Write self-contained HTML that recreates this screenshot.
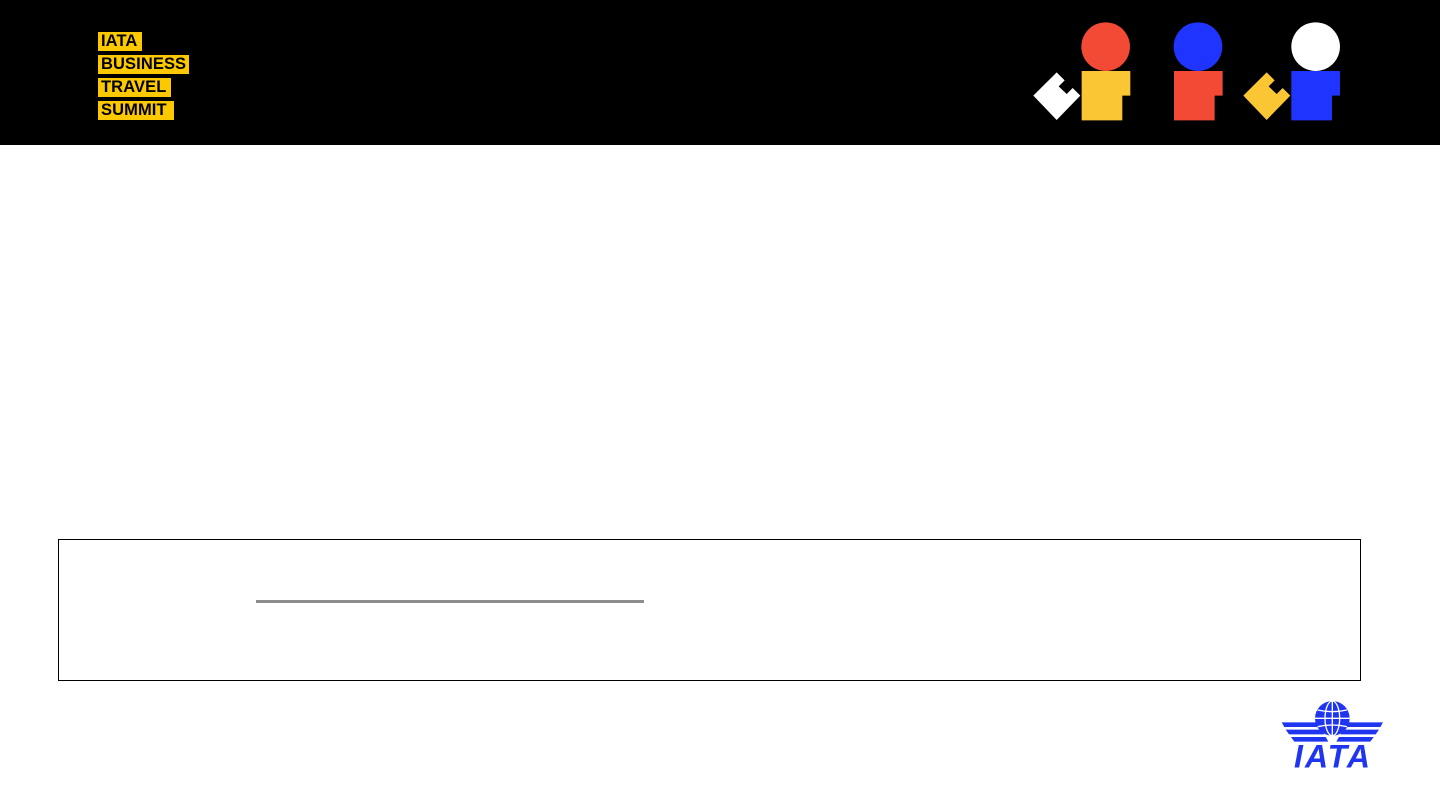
<!DOCTYPE html>
<html><head><meta charset="utf-8"><style>
html,body{margin:0;padding:0;width:1440px;height:810px;background:#fff;overflow:hidden;font-family:"Liberation Sans",sans-serif}
.hdr{position:absolute;left:0;top:0;width:1440px;height:145px;background:#000}
.lb{position:absolute;left:98px;height:19px;background:#fcc800;color:#000;font-weight:bold;font-size:16.5px;line-height:19px;padding-left:3px;box-sizing:border-box;letter-spacing:0.1px}
.box{position:absolute;left:58px;top:539px;width:1303px;height:142px;border:1px solid #000;box-sizing:border-box}
.ln{position:absolute;left:256px;top:600px;width:388px;height:3px;background:#8c8c8c}
</style></head><body>
<div class="hdr"></div>
<div class="lb" style="top:32px;width:44px">IATA</div>
<div class="lb" style="top:55px;width:91px">BUSINESS</div>
<div class="lb" style="top:78px;width:73px">TRAVEL</div>
<div class="lb" style="top:101px;width:76px">SUMMIT</div>
<svg style="position:absolute;left:0;top:0" width="1440" height="145">
<g transform="translate(1025,15) scale(0.3333)">
<polygon fill="#fff" points="25,242 95,172 119,196 101,214 125,237 143,219 166,242 95,315"/>
<circle cx="242" cy="95" r="73" fill="#f24a35"/>
<polygon fill="#fbc633" points="170,168 316,168 316,242 292,242 292,316 170,316"/>
<circle cx="519" cy="95" r="73" fill="#1f35ff"/>
<polygon fill="#f24a35" points="447,168 593,168 593,242 569,242 569,316 447,316"/>
<polygon fill="#fbc633" points="655,242 725,172 749,196 731,214 755,237 773,219 796,242 725,315"/>
<circle cx="872" cy="95" r="73" fill="#fff"/>
<polygon fill="#1f35ff" points="799,168 945,168 945,242 921,242 921,316 799,316"/>
</g>
</svg>
<div class="box"></div>
<div class="ln"></div>
<svg style="position:absolute;left:1275px;top:695px" width="115" height="80" viewBox="0 0 345 240">
<g fill="#1f35f0">
<circle cx="172" cy="70" r="52"/>
<path d="M20 82 L130 82 L136 96 L28 96 Z M32 104 L140 104 L148 118 L42 118 Z M48 126 L152 126 L160 140 L58 140 Z"/>
<path d="M324 82 L214 82 L208 96 L316 96 Z M312 104 L204 104 L196 118 L302 118 Z M296 126 L192 126 L184 140 L286 140 Z"/>
<text x="174" y="218" text-anchor="middle" font-family="Liberation Sans,sans-serif" font-weight="bold" font-style="italic" font-size="96" letter-spacing="6">IATA</text>
</g>
<g fill="none" stroke="#fff" stroke-width="4">
<ellipse cx="172" cy="70" rx="22" ry="52"/><line x1="172" y1="18" x2="172" y2="122"/>
<line x1="120" y1="70" x2="224" y2="70"/><path d="M128 45 Q172 55 216 45 M128 95 Q172 85 216 95"/>
</g>
</svg>
</body></html>
